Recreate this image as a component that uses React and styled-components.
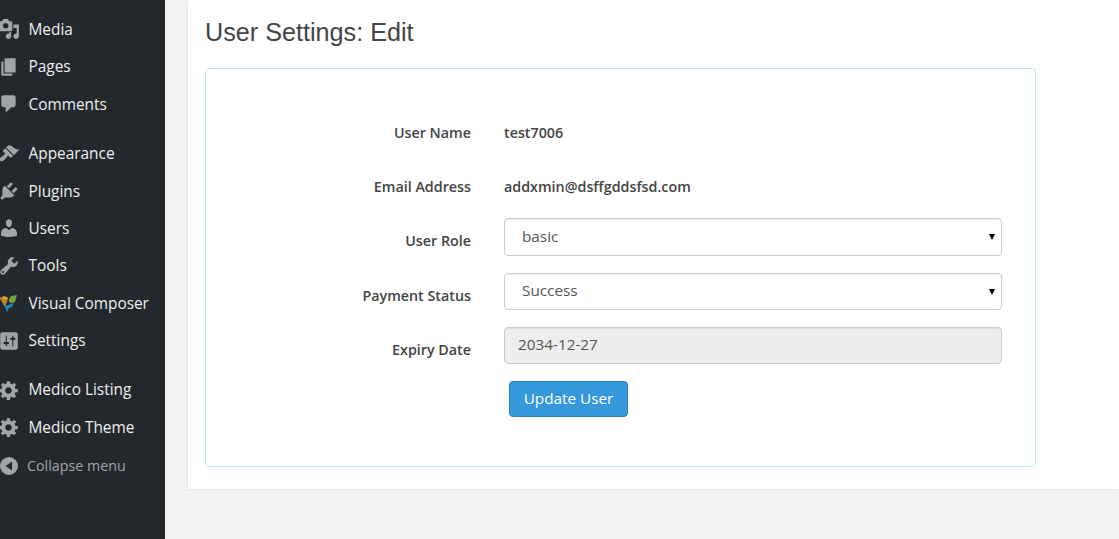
import React from 'react'
import styled, { createGlobalStyle } from 'styled-components'

const GlobalStyle = createGlobalStyle`
  html, body {
    margin:0;
    height:100%;
    overflow:hidden;
    background:#f1f1f1;
    font-family:"Open Sans", sans-serif;
  }
`
const Page = styled.div`
  display:flex;
  height:539px;
  overflow:hidden;
`
const Sidebar = styled.nav`
  width:165px;
  flex-shrink:0;
  background:#23282d;
  padding-top:10.75px;
  box-sizing:border-box;
`
const MenuRow = styled.div`
  display:flex;
  align-items:center;
  height:37.4px;
  margin-top:${p => (p.$separated ? '12px' : '0')};
  color:#eee;
  font-size:15.4px;
`
const IconSlot = styled.svg`
  width:22px;
  height:22px;
  margin-left:-2px;
  margin-right:8.5px;
  flex-shrink:0;
  fill:#a0a5aa;
`
const CollapseRow = styled.div`
  display:flex;
  align-items:center;
  height:20px;
  margin-top:9.55px;
  color:#a0a5aa;
  font-size:14.3px;
`
const CollapseIcon = styled.svg`
  width:20px;
  height:20px;
  margin-left:-1px;
  margin-right:8px;
  fill:#a0a5aa;
`
const MainArea = styled.main`
  flex-grow:1;
  padding-left:23px;
`
const Panel = styled.section`
  height:489px;
  box-sizing:border-box;
  padding:0 83px 0 17px;
  background:#fff;
  box-shadow:0 0 2px rgba(0,0,0,.12);
`
const Title = styled.h1`
  margin:0;
  height:68px;
  padding-top:17px;
  box-sizing:border-box;
  font:400 25.2px/30px "Liberation Sans", Arial, sans-serif;
  color:#444;
`
const Card = styled.div`
  height:399px;
  box-sizing:border-box;
  border:1px solid #bce8f1;
  border-radius:4px;
  padding:36px 33px 0 0;
`
const FormRow = styled.div`
  display:grid;
  grid-template-columns:265px 498px;
  column-gap:33px;
  align-items:center;
  height:${p => p.$height}px;
  margin-bottom:${p => p.$gap}px;
`
const Label = styled.label`
  text-align:right;
  font-size:14.3px;
  font-weight:600;
  color:#444;
  padding-top:${p => p.$drop || 0}px;
`
const Value = styled.div`
  font-size:14.3px;
  font-weight:600;
  color:#444;
`
const SelectWrap = styled.div`
  position:relative;
  height:100%;
  &::after {
    content:'';
    position:absolute;
    right:7px;
    top:50%;
    margin-top:-3px;
    border-top:6px solid #000;
    border-left:3px solid transparent;
    border-right:3px solid transparent;
    pointer-events:none;
  }
`
const Select = styled.select`
  appearance:none;
  width:100%;
  height:100%;
  box-sizing:border-box;
  padding:0 17px ${p => p.$lift}px;
  border:1px solid #ccc;
  border-radius:4px;
  background:#fff;
  box-shadow:inset 0 1px 1px rgba(0,0,0,.075);
  font:400 15.3px "Open Sans", sans-serif;
  color:#555;
`
const DateInput = styled.input`
  width:100%;
  height:100%;
  box-sizing:border-box;
  padding:0 13px 4px;
  border:1px solid #ccc;
  border-radius:4px;
  background:#eee;
  box-shadow:inset 0 1px 1px rgba(0,0,0,.075);
  font:400 15.3px "Open Sans", sans-serif;
  color:#555;
  opacity:1;
`
const ButtonRow = styled.div`
  padding-left:303px;
`
const UpdateButton = styled.button`
  width:119px;
  height:36px;
  padding:0 0 2px;
  border:1px solid #2a80b9;
  border-radius:4px;
  background:#3498db;
  color:#fff;
  font:400 15.3px "Open Sans", sans-serif;
`

const icons = {
  media: 'M13 11V4c0-.55-.45-1-1-1h-1.67L9 1H5L3.67 3H2c-.55 0-1 .45-1 1v7c0 .55.45 1 1 1h10c.55 0 1-.45 1-1zM7 4.5c1.38 0 2.5 1.12 2.5 2.5S8.38 9.5 7 9.5 4.5 8.38 4.5 7 5.62 4.5 7 4.5zM14 6h5v10.5c0 1.38-1.12 2.5-2.5 2.5S14 17.88 14 16.5s1.12-2.5 2.5-2.5c.17 0 .34.02.5.05V9h-3V6zm-4 8.05V13h2v3.5c0 1.38-1.12 2.5-2.5 2.5S7 17.88 7 16.5 8.12 14 9.5 14c.17 0 .34.02.5.05z',
  pages: 'M6 15V2h10v13H6zm-1 1h8v2H3V5h2v11z',
  comments: 'M5 2h9c1.1 0 2 .9 2 2v7c0 1.1-.9 2-2 2h-2l-5 5v-5H5c-1.1 0-2-.9-2-2V4c0-1.1.9-2 2-2z',
  appearance: 'M14.48 11.06L7.41 3.99l1.5-1.5c.5-.56 2.3-.47 3.51.32 1.21.8 1.43 1.28 2.91 2.1 1.18.64 2.45 1.26 4.45.85zm-.71.71L6.7 4.7 4.93 6.47c-.39.39-.39 1.02 0 1.41l1.06 1.06c.39.39.39 1.03 0 1.42-.6.6-1.43 1.11-2.21 1.69-.35.26-.7.53-1.01.84C1.43 13.23.91 15.01 1.9 16c.99.99 2.77.47 4.06-.82.31-.31.58-.66.84-1.01.58-.78 1.09-1.61 1.69-2.21.39-.39 1.03-.39 1.42 0l1.06 1.06c.39.39 1.02.39 1.41 0z',
  plugins: 'M13.11 4.36L9.87 7.6 8 5.73l3.24-3.24c.35-.34 1.05-.2 1.56.32.52.51.66 1.21.31 1.55zm-8 1.77l.91-1.12 9.01 9.01-1.19.84c-.71.71-2.63 1.16-3.82 1.16H6.14L4.9 17.26c-.59.59-1.54.59-2.12 0-.59-.58-.59-1.53 0-2.12l1.24-1.24v-3.88c0-1.13.4-3.19 1.09-3.89zm7.26 3.97l3.24-3.24c.34-.35 1.04-.21 1.55.31.52.51.66 1.21.31 1.55l-3.24 3.25z',
  users: 'M10 9.25c-2.27 0-2.73-3.44-2.73-3.44C7 4.02 7.82 2 9.97 2c2.16 0 2.98 2.02 2.71 3.81 0 0-.41 3.44-2.68 3.44zm0 2.57L12.72 10c2.39 0 4.52 2.33 4.52 4.53v2.49s-3.65 1.13-7.24 1.13c-3.65 0-7.24-1.13-7.24-1.13v-2.49c0-2.25 1.94-4.48 4.47-4.48z',
  tools: 'M16.68 9.77c-1.34 1.34-3.3 1.67-4.95.99l-5.41 6.52c-.99.99-2.59.99-3.58 0s-.99-2.59 0-3.57l6.52-5.42c-.68-1.65-.35-3.61.99-4.95 1.28-1.28 3.12-1.62 4.72-1.06l-2.89 2.89 2.82 2.82 2.86-2.87c.53 1.58.18 3.39-1.08 4.65zM3.81 16.21c.4.39 1.04.39 1.43 0 .4-.4.4-1.04 0-1.43-.39-.4-1.03-.4-1.43 0-.39.39-.39 1.03 0 1.43z',
  settings: 'M18 16V4c0-1.1-.9-2-2-2H4c-1.1 0-2 .9-2 2v12c0 1.1.9 2 2 2h12c1.1 0 2-.9 2-2zM8 11h1c.55 0 1 .45 1 1s-.45 1-1 1H8v1.5c0 .28-.22.5-.5.5s-.5-.22-.5-.5V13H6c-.55 0-1-.45-1-1s.45-1 1-1h1V5.5c0-.28.22-.5.5-.5s.5.22.5.5V11zm5-2h-1c-.55 0-1-.45-1-1s.45-1 1-1h1V5.5c0-.28.22-.5.5-.5s.5.22.5.5V7h1c.55 0 1 .45 1 1s-.45 1-1 1h-1v5.5c0 .28-.22.5-.5.5s-.5-.22-.5-.5V9z',
  generic: 'M18 12h-2.18c-.17.7-.44 1.35-.81 1.93l1.54 1.54-2.1 2.1-1.54-1.54c-.58.36-1.23.63-1.91.79V19H8v-2.18c-.68-.16-1.33-.43-1.91-.79l-1.54 1.54-2.12-2.12 1.54-1.54c-.36-.58-.63-1.23-.79-1.91H1V9.03h2.17c.16-.7.44-1.35.8-1.94L2.43 5.55l2.1-2.1 1.54 1.54c.58-.37 1.24-.64 1.93-.81V2h3v2.18c.68.16 1.33.43 1.91.79l1.54-1.54 2.12 2.12-1.54 1.54c.36.59.64 1.24.8 1.94H18V12zm-8.5 1.5c1.66 0 3-1.34 3-3s-1.34-3-3-3-3 1.34-3 3 1.34 3 3 3z'
}

const MenuIcon = ({ name }) => (
  <IconSlot viewBox="0 0 20 20">
    <path d={icons[name]} fillRule="evenodd" />
  </IconSlot>
)

const ComposerIcon = () => (
  <IconSlot viewBox="0 0 22 22">
    <path d="M1 6l5-2 4 2-1 4-2 5-3-5z" fill="#b5872f" />
    <path d="M6 4l4 2-2 2-3-2z" fill="#dba52c" />
    <path d="M11 7l2-3 6-1-2 7-3 1-3-1z" fill="#6fa53a" />
    <path d="M6 14l4-1 6-2-2 4-3 1-2 4-1-3z" fill="#1c87b8" />
  </IconSlot>
)

const menu = [
  { label: 'Media', icon: 'media' },
  { label: 'Pages', icon: 'pages' },
  { label: 'Comments', icon: 'comments' },
  { label: 'Appearance', icon: 'appearance', separated: true },
  { label: 'Plugins', icon: 'plugins' },
  { label: 'Users', icon: 'users' },
  { label: 'Tools', icon: 'tools' },
  { label: 'Visual Composer', icon: 'composer' },
  { label: 'Settings', icon: 'settings' },
  { label: 'Medico Listing', icon: 'generic', separated: true },
  { label: 'Medico Theme', icon: 'generic' }
]

export default function App() {
  return (
    <Page>
      <GlobalStyle />
      <Sidebar>
        {menu.map(item => (
          <MenuRow key={item.label} $separated={item.separated}>
            {item.icon === 'composer' ? <ComposerIcon /> : <MenuIcon name={item.icon} />}
            {item.label}
          </MenuRow>
        ))}
        <CollapseRow>
          <CollapseIcon viewBox="0 0 20 20">
            <path fillRule="evenodd" d="M10 1a9 9 0 1 1 0 18 9 9 0 0 1 0-18zm3 4.5L6.5 10l6.5 4.5z" />
          </CollapseIcon>
          Collapse menu
        </CollapseRow>
      </Sidebar>
      <MainArea>
        <Panel>
          <Title>User Settings: Edit</Title>
          <Card>
            <FormRow $height={54} $gap={0}>
              <Label>User Name</Label>
              <Value>test7006</Value>
            </FormRow>
            <FormRow $height={54} $gap={5}>
              <Label>Email Address</Label>
              <Value>addxmin@dsffgddsfsd.com</Value>
            </FormRow>
            <FormRow $height={38} $gap={17}>
              <Label $drop={6}>User Role</Label>
              <SelectWrap>
                <Select $lift={2} defaultValue="basic"><option>basic</option></Select>
              </SelectWrap>
            </FormRow>
            <FormRow $height={37} $gap={17}>
              <Label $drop={7}>Payment Status</Label>
              <SelectWrap>
                <Select $lift={4} defaultValue="Success"><option>Success</option></Select>
              </SelectWrap>
            </FormRow>
            <FormRow $height={37} $gap={17}>
              <Label $drop={7}>Expiry Date</Label>
              <DateInput disabled value="2034-12-27" readOnly />
            </FormRow>
            <ButtonRow>
              <UpdateButton>Update User</UpdateButton>
            </ButtonRow>
          </Card>
        </Panel>
      </MainArea>
    </Page>
  )
}
